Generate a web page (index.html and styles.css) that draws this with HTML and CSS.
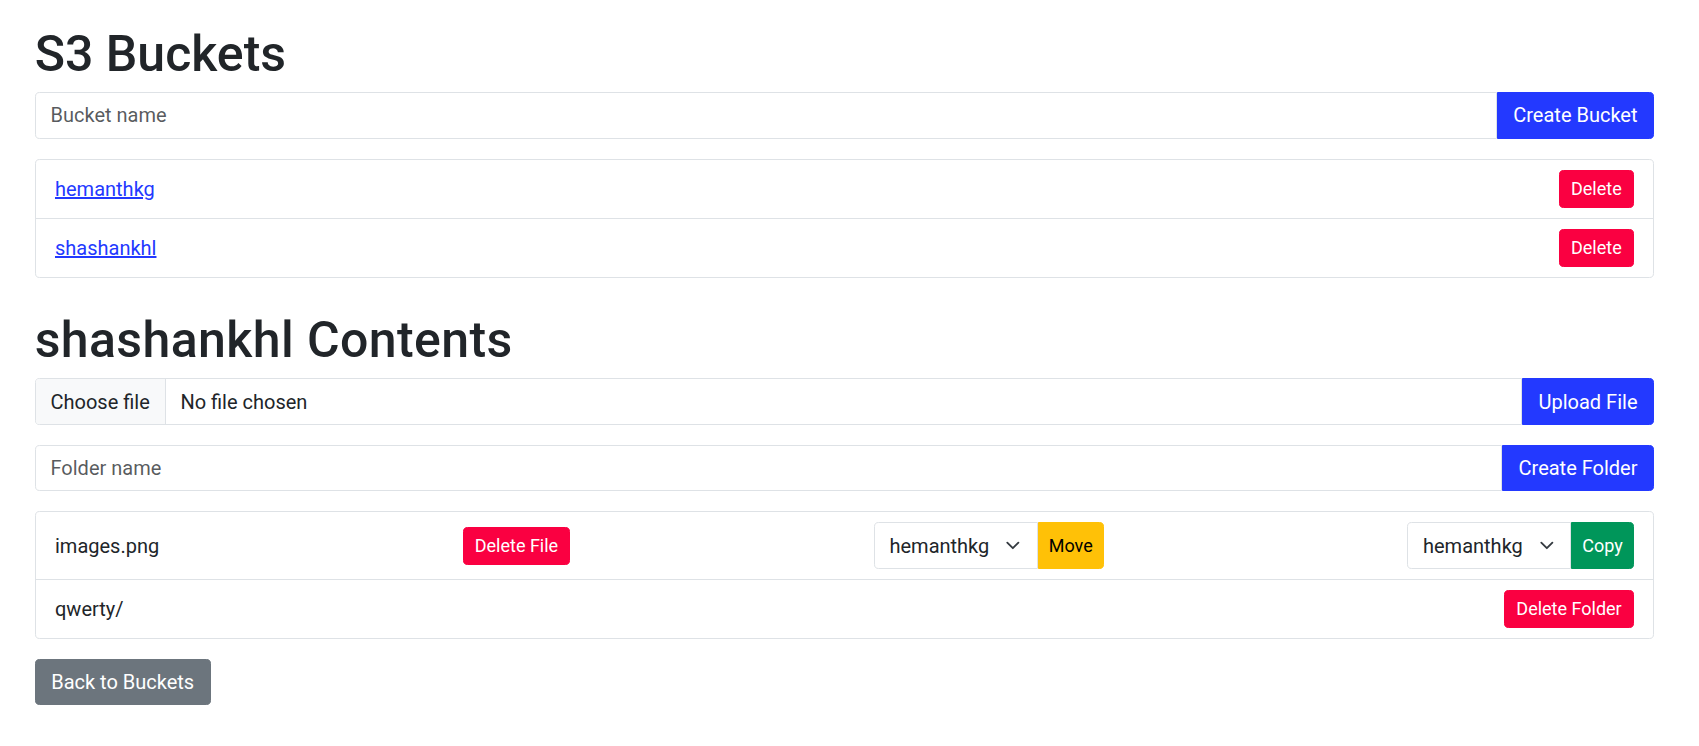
FILE: index.html
```html
<!DOCTYPE html>
<html lang="en">
<head>
<meta charset="utf-8">
<title>S3 Buckets</title>
<link rel="stylesheet" href="styles.css">
</head>
<body>
<main class="page">
  <h1 class="title">S3 Buckets</h1>
  <form class="input-group">
    <input class="form-control" type="text" placeholder="Bucket name">
    <button class="btn btn-primary" type="button">Create Bucket</button>
  </form>
  <ul class="list-group">
    <li class="list-item"><a class="link" href="#">hemanthkg</a><button class="btn btn-sm btn-danger" type="button">Delete</button></li>
    <li class="list-item"><a class="link" href="#">shashankhl</a><button class="btn btn-sm btn-danger" type="button">Delete</button></li>
  </ul>

  <h1 class="title title-contents">shashankhl Contents</h1>
  <form class="input-group">
    <div class="file-control"><span class="file-btn">Choose file</span><span class="file-name">No file chosen</span></div>
    <button class="btn btn-primary" type="button">Upload File</button>
  </form>
  <form class="input-group">
    <input class="form-control" type="text" placeholder="Folder name">
    <button class="btn btn-primary" type="button">Create Folder</button>
  </form>
  <ul class="list-group">
    <li class="list-item">
      <span class="item-name">images.png</span>
      <button class="btn btn-sm btn-danger" type="button">Delete File</button>
      <div class="input-group inline-group">
        <div class="select-wrap">
          <select class="form-select"><option>hemanthkg</option></select>
          <svg class="chevron" viewBox="0 0 16 16" width="20" height="15" aria-hidden="true"><path fill="none" stroke="#343a40" stroke-linecap="round" stroke-linejoin="round" stroke-width="2" d="m2 5 6 6 6-6"/></svg>
        </div>
        <button class="btn btn-sm btn-warning" type="button">Move</button>
      </div>
      <div class="input-group inline-group">
        <div class="select-wrap">
          <select class="form-select"><option>hemanthkg</option></select>
          <svg class="chevron" viewBox="0 0 16 16" width="20" height="15" aria-hidden="true"><path fill="none" stroke="#343a40" stroke-linecap="round" stroke-linejoin="round" stroke-width="2" d="m2 5 6 6 6-6"/></svg>
        </div>
        <button class="btn btn-sm btn-success" type="button">Copy</button>
      </div>
    </li>
    <li class="list-item">
      <span class="item-name">qwerty/</span>
      <button class="btn btn-sm btn-danger" type="button">Delete Folder</button>
    </li>
  </ul>
  <button class="btn btn-secondary" type="button">Back to Buckets</button>
</main>
</body>
</html>
```

FILE: styles.css
```css
* { box-sizing: border-box; }

body {
  margin: 0;
  font-family: Roboto, "Liberation Sans", sans-serif;
  font-size: 20px;
  line-height: 1.5;
  color: #212529;
  background: #fff;
}

.page {
  padding: 23.5px 45px 0 34.7px;
}

.title {
  font-size: 50px;
  font-weight: 500;
  line-height: 60px;
  margin: 0 0 8.5px;
}

.title-contents {
  margin-top: 32.3px;
  letter-spacing: 0.4px;
}

.input-group {
  display: flex;
  align-items: stretch;
  margin: 0 0 20px;
}

.form-control {
  flex: 1 1 auto;
  min-width: 0;
  height: 46.5px;
  padding: 7.25px 14.8px;
  font: inherit;
  line-height: 30px;
  color: #212529;
  background: #fff;
  border: 1px solid #dee2e6;
  border-radius: 4.6px 0 0 4.6px;
  outline: none;
}

.form-control::placeholder {
  color: rgba(33, 37, 41, 0.75);
}

.file-control {
  flex: 1 1 auto;
  display: flex;
  align-items: stretch;
  height: 46.5px;
  border: 1px solid #dee2e6;
  border-radius: 4.6px 0 0 4.6px;
  overflow: hidden;
  line-height: 30px;
}

.file-btn {
  padding: 7.25px 14.8px;
  background: #f8f9fa;
  border-right: 1px solid #dee2e6;
  margin-right: 14.8px;
}

.file-name {
  padding: 7.25px 0;
}

.btn {
  font: inherit;
  line-height: 30px;
  padding: 7.25px 15.5px;
  border: 1px solid transparent;
  border-radius: 4.6px;
  color: #fff;
  white-space: nowrap;
  cursor: pointer;
}

.input-group > .btn {
  border-radius: 0 4.6px 4.6px 0;
}

.btn-primary { background: #2339ff; border-color: #2339ff; }
.btn-danger { background: #fa0041; border-color: #fa0041; }
.btn-warning { background: #ffc107; border-color: #ffc107; color: #000; }
.btn-success { background: #00965a; border-color: #00965a; }
.btn-secondary { background: #6c757d; border-color: #6c757d; }

.btn-sm {
  font-size: 18px;
  line-height: 26px;
  padding: 5px 11px;
  border-radius: 4.6px;
}

.list-group {
  list-style: none;
  margin: 0 0 20px;
  padding: 0;
  border: 1px solid #dee2e6;
  border-radius: 4.6px;
}

.list-item {
  display: flex;
  justify-content: space-between;
  align-items: center;
  padding: 10px 19.3px;
}

.list-item + .list-item {
  border-top: 1px solid #dee2e6;
}

.link {
  color: #2339ff;
  text-decoration: underline;
}

.inline-group {
  margin: 0;
}

.inline-group > .btn-sm {
  padding: 5px 10px;
}

.select-wrap {
  position: relative;
  display: flex;
}

.form-select {
  appearance: none;
  -webkit-appearance: none;
  width: 164px;
  height: 46.5px;
  padding: 7.25px 44.3px 7.25px 14.8px;
  font: inherit;
  color: #212529;
  background: #fff;
  border: 1px solid #dee2e6;
  border-radius: 4.6px 0 0 4.6px;
  outline: none;
}

.chevron {
  position: absolute;
  right: 14.8px;
  top: 50%;
  margin-top: -7.4px;
  width: 19.7px;
  height: 14.8px;
  pointer-events: none;
}
```
